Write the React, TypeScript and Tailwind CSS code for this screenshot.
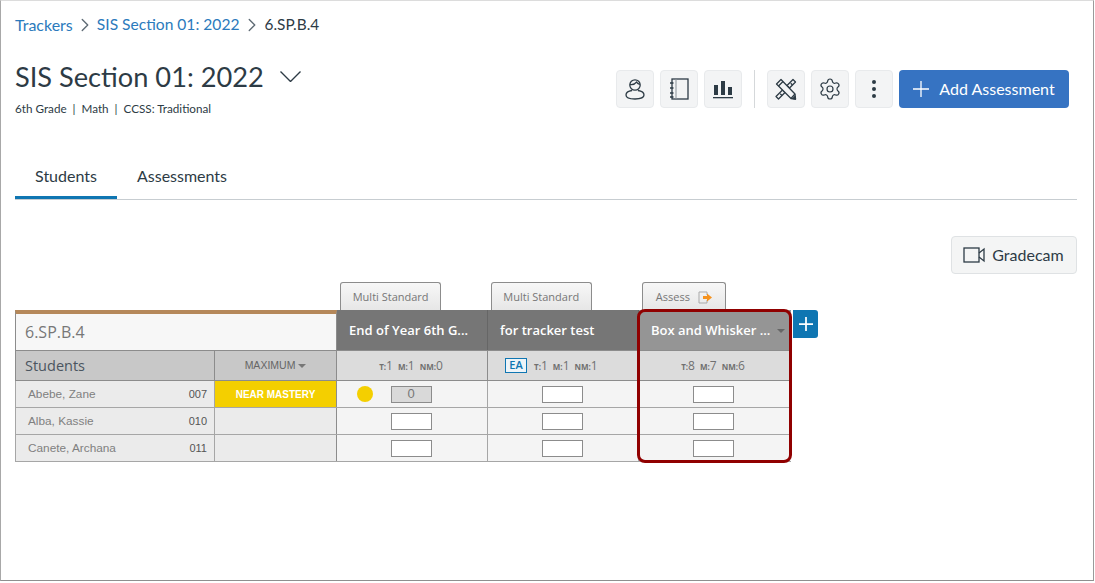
import { ChevronRight, Settings } from 'lucide-react';

const students = [
  { name: 'Abebe, Zane', id: '007' },
  { name: 'Alba, Kassie', id: '010' },
  { name: 'Canete, Archana', id: '011' },
];

function IconButton({ children }: { children: React.ReactNode }) {
  return (
    <button className="flex h-[38px] w-[38px] items-center justify-center rounded border border-[#e8eaec] bg-[#f3f4f5] text-[#2d3b45]">
      {children}
    </button>
  );
}

function PlusIcon({ size, width }: { size: number; width: number }) {
  return (
    <svg width={size} height={size} viewBox="0 0 16 16" stroke="currentColor" strokeWidth={width} fill="none">
      <path d="M8 0v16M0 8h16" />
    </svg>
  );
}

function UserIcon() {
  return (
    <svg width="20" height="22" viewBox="0 0 20 22" fill="none" stroke="currentColor" strokeWidth="1.3">
      <circle cx="10" cy="7" r="5.2" />
      <path d="M5 6.500c2 .3 5-.2 6.500-2.300 1 1.400 2 2 3.400 2.200" />
      <path d="M7 12.500c-4 .5-6 2.300-6 4.500 0 2.500 3.500 4 9 4s9-1.500 9-4c0-2.200-2-4-6-4.500" />
    </svg>
  );
}

function NotebookIcon() {
  return (
    <svg width="20" height="22" viewBox="0 0 20 22" fill="none" stroke="currentColor" strokeWidth="1.3">
      <rect x="3" y="1" width="16" height="20" />
      <path d="M7 1v20" strokeWidth="1" stroke="#8a9299" />
      <path d="M1 5h3.500M1 10h3.500M1 15h3.500M1 19h3.500" />
    </svg>
  );
}

function ChartIcon() {
  return (
    <svg width="20" height="20" viewBox="0 0 20 20" fill="currentColor">
      <rect x="1" y="6" width="4" height="10" />
      <rect x="8" y="2" width="4" height="14" />
      <rect x="15" y="8" width="4" height="8" />
      <rect x="0" y="18" width="20" height="1.300" />
    </svg>
  );
}

// pencil runs top-left to bottom-right, ruler the other way
function ToolsIcon() {
  return (
    <svg width="22" height="22" viewBox="0 0 22 22" fill="none" stroke="currentColor" strokeWidth="1.3" strokeLinejoin="round">
      <path d="M20.500 4 18 1.500l-17 17L3.500 21z" />
      <path d="M17.500 7l-1.800-1.800M14.500 10l-1.800-1.800M10 14.500l-1.800-1.800M7 17.500l-1.800-1.800" />
      <path d="M6 1.500 1.500 6 16 20.500l4.500.5-.5-5z" fill="#f3f4f5" />
      <path d="M8 3.500 3.500 8M20 16l-4 4.500" />
      <path d="M20.500 21l-.5-2.500-2 2z" fill="currentColor" />
    </svg>
  );
}

function DotsIcon() {
  return (
    <svg width="6" height="20" viewBox="0 0 6 20" fill="currentColor">
      <circle cx="3" cy="3" r="2" />
      <circle cx="3" cy="10" r="2" />
      <circle cx="3" cy="17" r="2" />
    </svg>
  );
}

function VideoIcon() {
  return (
    <svg width="22" height="16" viewBox="0 0 22 16" fill="none" stroke="currentColor" strokeWidth="1.3">
      <rect x="1" y="1" width="15" height="14" />
      <path d="M16 6l5-4v12l-5-4" />
    </svg>
  );
}

function AssessIcon() {
  return (
    <svg width="15" height="13" viewBox="0 0 15 13" fill="none">
      <path d="M9 4V1H1v11h8V9" stroke="#a9a9a9" strokeWidth="1" />
      <path d="M5 5h4V2.500L14 6.500l-5 4V8H5z" fill="#f5921e" />
    </svg>
  );
}

function ScoreBox({ value }: { value?: string }) {
  return (
    <div
      className={`flex h-[17px] w-[41px] items-center justify-center border border-[#8c8c8c] text-[13px] text-[#777] ${
        value ? 'bg-[#d9d9d9]' : 'bg-white'
      }`}
    >
      {value}
    </div>
  );
}

function Counts({ t, m, nm }: { t: number; m: number; nm: number }) {
  return (
    <span className="flex items-baseline gap-[5px] text-[12px] text-[#707070]">
      <span><span className="text-[8px] font-bold">T:</span>{t}</span>
      <span><span className="text-[8px] font-bold">M:</span>{m}</span>
      <span><span className="text-[8px] font-bold">NM:</span>{nm}</span>
    </span>
  );
}

function FolderTab({ children }: { children: React.ReactNode }) {
  return (
    <div className="flex h-[29px] items-center justify-center gap-2 rounded-t-[3px] border border-b-0 border-[#8c8c8c] bg-gradient-to-b from-[#f7f7f7] to-[#e6e6e6] text-[11px] text-[#777]">
      {children}
    </div>
  );
}

export default function App() {
  return (
    <div className="h-[583px] w-[1095px] overflow-hidden bg-white">
      <div className="h-[581px] w-[1094px] border border-t-[#dcdcdc] border-r-[#9a9a9a] border-b-[#8f8f8f] border-l-[#a8a8a8] pl-[14px] pr-[16px] font-['Lato',sans-serif] text-[#2d3b45]">
        <nav className="flex h-[50px] items-center pb-[2px]">
          <span className="text-base text-[#2b7abc]">Trackers</span>
          <ChevronRight className="mx-px h-[22px] w-[22px] text-[#5f6b75]" strokeWidth={1.5} />
          <span className="text-[15.600px] text-[#2b7abc]">SIS Section 01: 2022</span>
          <ChevronRight className="mx-[1.500px] h-[22px] w-[22px] text-[#5f6b75]" strokeWidth={1.5} />
          <span className="text-[15.400px]">6.SP.B.4</span>
        </nav>

        <div className="flex items-start justify-between">
          <div>
            <div className="mt-[6px] flex h-[40px] items-center gap-[16px]">
              <h1 className="text-[27.200px] leading-none">SIS Section 01: 2022</h1>
              <svg width="21" height="11" viewBox="0 0 21 11" fill="none" stroke="currentColor" strokeWidth="1.400" className="mb-[2px]">
                <path d="M.5.5l10 10 10-10" />
              </svg>
            </div>
            <p className="mt-[3px] text-[11.700px] leading-4">6th Grade&nbsp; |&nbsp; Math&nbsp; |&nbsp; CCSS: Traditional</p>
          </div>
          <div className="mr-[8px] mt-[19px] flex items-center gap-[6px]">
            <IconButton><UserIcon /></IconButton>
            <IconButton><NotebookIcon /></IconButton>
            <IconButton><ChartIcon /></IconButton>
            <div className="mx-[6px] h-[38px] w-px bg-[#d5d8da]" />
            <IconButton><ToolsIcon /></IconButton>
            <IconButton><Settings className="h-[24px] w-[24px]" strokeWidth={1.2} /></IconButton>
            <IconButton><DotsIcon /></IconButton>
            <button className="flex h-[38px] w-[170px] items-center justify-center gap-[10px] rounded bg-[#3673c2] text-base text-white">
              <PlusIcon size={16} width={1.300} />
              Add Assessment
            </button>
          </div>
        </div>

        <div className="mt-[38px] flex h-[46px] border-b border-[#c7cdd1] text-base">
          <div className="flex w-[102px] items-center justify-center border-b-[3px] border-[#0f76b2] pt-[1px] leading-none">Students</div>
          <div className="flex w-[130px] items-center justify-center pb-[1px]">Assessments</div>
        </div>

        <div className="mt-[36px] flex justify-end">
          <button className="flex h-[38px] w-[126px] items-center justify-center gap-[7px] rounded border border-[#dfe2e4] bg-[#f4f5f5] pr-px text-base">
            <VideoIcon />
            Gradecam
          </button>
        </div>

        <div className="relative mt-[8px] w-[776px] font-['Open_Sans',sans-serif]">
          <div className="flex h-[28px]">
            <div className="w-[325px]" />
            <div className="w-[151px] pl-[1px]"><div className="w-[101px]"><FolderTab>Multi Standard</FolderTab></div></div>
            <div className="w-[151px] pl-[1px]"><div className="w-[101px]"><FolderTab>Multi Standard</FolderTab></div></div>
            <div className="w-[151px] pl-[2px]"><div className="w-[84px]"><FolderTab>Assess <AssessIcon /></FolderTab></div></div>
          </div>

          <div className="flex h-[40px]">
            <div className="flex w-[322px] items-center border-x border-[#8c8c8c] border-t-4 border-t-[#b5885a] bg-[#f7f7f7] pl-[9px] text-base text-[#777]">6.SP.B.4</div>
            <div className="flex w-[151px] items-center truncate border-r border-[#666] bg-[#767676] pl-[12px] pt-[2px] text-[13px] font-semibold text-white">End of Year 6th G...</div>
            <div className="flex w-[151px] items-center border-r border-[#666] bg-[#767676] pl-[12px] pt-[2px] text-[13px] font-semibold text-white">for tracker test</div>
            <div className="flex w-[152px] items-center justify-between bg-[#959595] pl-[12px] pr-[6px] pt-[2px] text-[13px] font-semibold text-white">
              Box and Whisker ...
              <span className="h-0 w-0 border-x-[4px] border-t-[4px] border-x-transparent border-t-[#666]" />
            </div>
          </div>

          <div className="flex h-[31px] border-y border-[#8c8c8c]">
            <div className="flex w-[200px] items-center border-x border-[#8c8c8c] bg-[#c8c8c8] pl-[9px] text-[14.500px] text-[#4b5560]">Students</div>
            <div className="flex w-[122px] items-center justify-center gap-[3px] border-r border-[#8c8c8c] bg-[#c8c8c8] font-['Liberation_Sans',sans-serif] text-[10.500px] text-[#666]">
              MAXIMUM
              <span className="h-0 w-0 border-x-[4px] border-t-[4px] border-x-transparent border-t-[#777]" />
            </div>
            <div className="flex w-[151px] items-center justify-center border-r border-[#8c8c8c] bg-[#dcdcdc] pr-[2px]"><Counts t={1} m={1} nm={0} /></div>
            <div className="flex w-[151px] items-center gap-[7px] border-r border-[#8c8c8c] bg-[#dcdcdc] pl-[17px]">
              <span className="flex h-[15px] w-[22px] items-center justify-center border border-[#0f76b2] bg-[#eef4f8] text-[11px] font-semibold text-[#0f76b2]">EA</span>
              <Counts t={1} m={1} nm={1} />
            </div>
            <div className="flex w-[152px] items-center justify-center bg-[#dcdcdc] pr-[4px]"><Counts t={8} m={7} nm={6} /></div>
          </div>

          {students.map((s, i) => (
            <div key={s.id} className="flex h-[27px] border-b border-[#a6a6a6] font-['Liberation_Sans',sans-serif]">
              <div className="flex w-[200px] items-center justify-between border-x border-[#a6a6a6] bg-[#ebebeb] pl-[12px] pr-[7px] pt-px text-[11.800px] text-[#808080]">
                <span>{s.name}</span>
                <span className="text-[11px] text-[#555]">{s.id}</span>
              </div>
              {i === 0 ? (
                <div className="flex w-[122px] items-center justify-center border-r border-[#8c8c8c] bg-[#f4cf00] text-[10px] font-bold text-white">NEAR MASTERY</div>
              ) : (
                <div className="w-[122px] border-r border-[#8c8c8c] bg-[#ebebeb]" />
              )}
              <div className="relative flex w-[151px] items-center justify-center border-r border-[#a6a6a6] bg-[#f4f4f4] pr-[2px]">
                {i === 0 && <span className="absolute left-[20px] h-4 w-4 rounded-full bg-[#f4cf00]" />}
                <ScoreBox value={i === 0 ? '0' : undefined} />
              </div>
              <div className="flex w-[151px] items-center justify-center border-r border-[#a6a6a6] bg-[#f4f4f4] pr-[2px]"><ScoreBox /></div>
              <div className="flex w-[152px] items-center justify-center bg-[#f4f4f4] pr-[4px]"><ScoreBox /></div>
            </div>
          ))}

          <div className="pointer-events-none absolute left-[622px] top-[27px] h-[154px] w-[155px] rounded-[8px] border-[3px] border-[#900000]" />
          <button className="absolute left-[778px] top-[28px] flex h-[28px] w-[25px] items-center justify-center rounded-r-[3px] bg-[#0f76b2] text-white">
            <PlusIcon size={14} width={2} />
          </button>
        </div>
      </div>
    </div>
  );
}
